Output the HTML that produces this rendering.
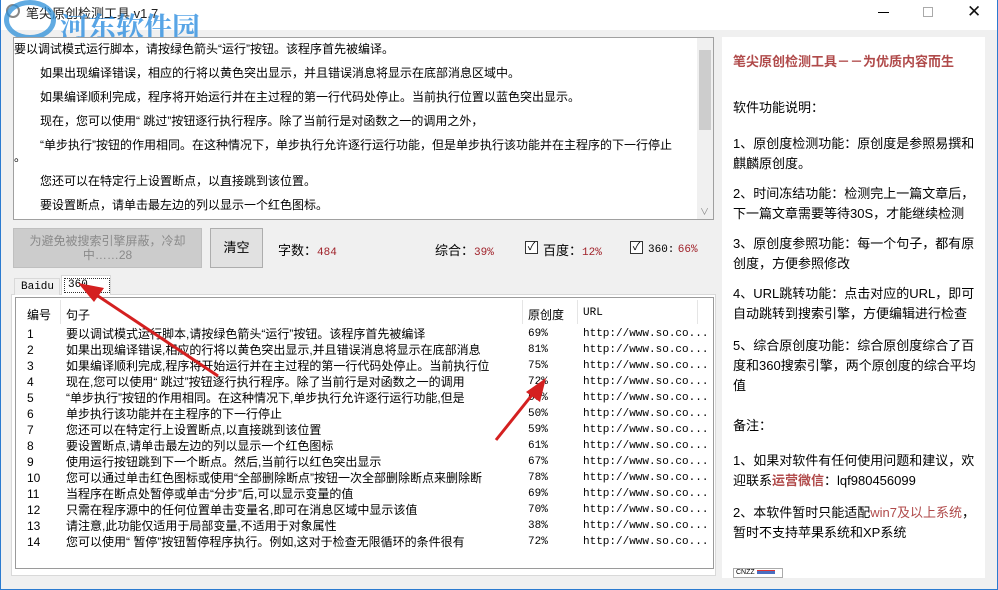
<!DOCTYPE html>
<html><head><meta charset="utf-8"><style>
*{margin:0;padding:0;box-sizing:border-box}
body{width:998px;height:590px;position:relative;background:#f0f0f0;font-family:"Liberation Sans","Noto Sans CJK SC",sans-serif;font-size:12px;color:#000;overflow:hidden}
.a{position:absolute;white-space:nowrap}
.mono{font-family:"Liberation Mono","Noto Sans CJK SC",monospace;font-size:11px}
.red{color:#a0222a}
.rp div{position:absolute;left:0;width:245px;white-space:normal;line-height:20px;font-size:13px}
</style></head><body>
<div class="a" style="left:0;top:0;width:998px;height:30px;background:#fff"></div>
<div class="a" style="left:0;top:0;width:1px;height:590px;background:#2b7bd0"></div>
<div class="a" style="left:997px;top:0;width:1px;height:590px;background:#2b7bd0"></div>
<div class="a" style="left:0;top:589px;width:998px;height:1px;background:#2b7bd0"></div>
<div class="a" style="left:6px;top:4px;width:14px;height:14px;border-radius:50%;border:2px solid #888"></div>
<div class="a" style="left:26px;top:3px;font-size:13px;color:#222">笔尖原创检测工具 v1.7</div>
<div class="a" style="left:878px;top:12px;width:11px;height:1px;background:#000"></div>
<div class="a" style="left:923px;top:7px;width:10px;height:10px;border:1px solid #aaa"></div>
<div class="a" style="left:967px;top:2px;font-size:17px;color:#111">✕</div>
<div class="a" style="left:4px;top:0;width:52px;height:40px;border-radius:50%;border:5px solid #2c8fd8;opacity:.75"></div>
<div class="a" style="left:60px;top:6px;font-size:28px;font-weight:bold;color:#2f8fe0;opacity:.8;font-family:'Noto Serif CJK SC',serif">河东软件园</div>

<div class="a" style="left:13px;top:37px;width:701px;height:183px;background:#fff;border:1px solid #a0a0a0"></div>
<div class="a" style="left:697px;top:38px;width:16px;height:181px;background:#f0f0f0"></div>
<div class="a" style="left:699px;top:50px;width:12px;height:80px;background:#cdcdcd"></div>
<div class="a" style="left:700px;top:205px;font-size:9px;color:#888">∨</div>
<div class="a" style="left:14px;top:40px;font-size:12px">要以调试模式运行脚本，请按绿色箭头“运行”按钮。该程序首先被编译。</div>
<div class="a" style="left:40px;top:64px">如果出现编译错误，相应的行将以黄色突出显示，并且错误消息将显示在底部消息区域中。</div>
<div class="a" style="left:40px;top:88px">如果编译顺利完成，程序将开始运行并在主过程的第一行代码处停止。当前执行位置以蓝色突出显示。</div>
<div class="a" style="left:40px;top:112px">现在，您可以使用“ 跳过”按钮逐行执行程序。除了当前行是对函数之一的调用之外，</div>
<div class="a" style="left:40px;top:136px">“单步执行”按钮的作用相同。在这种情况下，单步执行允许逐行运行功能，但是单步执行该功能并在主程序的下一行停止</div>
<div class="a" style="left:14px;top:148px">。</div>
<div class="a" style="left:40px;top:172px">您还可以在特定行上设置断点，以直接跳到该位置。</div>
<div class="a" style="left:40px;top:196px">要设置断点，请单击最左边的列以显示一个红色图标。</div>

<div class="a" style="left:13px;top:228px;width:189px;height:40px;background:#cccccc;border:1px solid #bfbfbf;color:#8a8a8a;text-align:center;font-size:12px;line-height:14px;padding-top:5px;white-space:normal">为避免被搜索引擎屏蔽，冷却中……28</div>
<div class="a" style="left:210px;top:228px;width:53px;height:40px;background:#e1e1e1;border:1px solid #adadad;text-align:center;line-height:38px;font-size:13px">清空</div>
<div class="a" style="left:278px;top:240px;font-size:13px">字数：<span class="mono red">484</span></div>
<div class="a" style="left:435px;top:240px;font-size:13px">综合：<span class="mono red">39%</span></div>
<div class="a" style="left:525px;top:241px;width:13px;height:13px;border:1px solid #333;font-size:11px;line-height:11px;text-align:center;background:#fff">✓</div>
<div class="a" style="left:543px;top:240px;font-size:13px">百度：<span class="mono red">12%</span></div>
<div class="a" style="left:630px;top:241px;width:13px;height:13px;border:1px solid #333;font-size:11px;line-height:11px;text-align:center;background:#fff">✓</div>
<div class="a" style="left:648px;top:241px;font-size:12px"><span class="mono">360:</span> <span class="mono red">66%</span></div>

<div class="a" style="left:11px;top:294px;width:705px;height:282px;background:#fff;border:1px solid #d9d9d9"></div>
<div class="a mono" style="left:14px;top:278px;width:46px;height:17px;background:#f0f0f0;border:1px solid #d9d9d9;border-bottom:none;padding:2px 0 0 6px">Baidu</div>
<div class="a" style="left:61px;top:275px;width:50px;height:20px;background:#fff;border:1px solid #d9d9d9;border-bottom:none"></div>
<div class="a mono" style="left:64px;top:278px;width:46px;height:15px;border:1px dotted #333;padding:0 0 0 3px;line-height:13px">360</div>
<div class="a" style="left:15px;top:297px;width:699px;height:272px;background:#fff;border:1px solid #9a9a9a"></div>
<div class="a" style="left:60px;top:300px;width:1px;height:24px;background:#e5e5e5"></div>
<div class="a" style="left:522px;top:300px;width:1px;height:24px;background:#e5e5e5"></div>
<div class="a" style="left:577px;top:300px;width:1px;height:24px;background:#e5e5e5"></div>
<div class="a" style="left:697px;top:300px;width:1px;height:24px;background:#e5e5e5"></div>
<div class="a" style="left:27px;top:306px">编号</div>
<div class="a" style="left:66px;top:306px">句子</div>
<div class="a" style="left:528px;top:306px">原创度</div>
<div class="a mono" style="left:583px;top:307px">URL</div>
<div class="a" style="left:27px;top:326px;line-height:16px">1<br>2<br>3<br>4<br>5<br>6<br>7<br>8<br>9<br>10<br>11<br>12<br>13<br>14</div>
<div class="a" style="left:66px;top:326px;line-height:16px;font-size:12px">要以调试模式运行脚本,请按绿色箭头“运行”按钮。该程序首先被编译<br>如果出现编译错误,相应的行将以黄色突出显示,并且错误消息将显示在底部消息<br>如果编译顺利完成,程序将开始运行并在主过程的第一行代码处停止。当前执行位<br>现在,您可以使用“ 跳过”按钮逐行执行程序。除了当前行是对函数之一的调用<br>“单步执行”按钮的作用相同。在这种情况下,单步执行允许逐行运行功能,但是<br>单步执行该功能并在主程序的下一行停止<br>您还可以在特定行上设置断点,以直接跳到该位置<br>要设置断点,请单击最左边的列以显示一个红色图标<br>使用运行按钮跳到下一个断点。然后,当前行以红色突出显示<br>您可以通过单击红色图标或使用“全部删除断点”按钮一次全部删除断点来删除断<br>当程序在断点处暂停或单击“分步”后,可以显示变量的值<br>只需在程序源中的任何位置单击变量名,即可在消息区域中显示该值<br>请注意,此功能仅适用于局部变量,不适用于对象属性<br>您可以使用“ 暂停”按钮暂停程序执行。例如,这对于检查无限循环的条件很有</div>
<div class="a mono" style="left:528px;top:326px;line-height:16px">69%<br>81%<br>75%<br>72%<br>69%<br>50%<br>59%<br>61%<br>67%<br>78%<br>69%<br>70%<br>38%<br>72%</div>
<div class="a mono" style="left:583px;top:326px;line-height:16px">http://www.so.co...<br>http://www.so.co...<br>http://www.so.co...<br>http://www.so.co...<br>http://www.so.co...<br>http://www.so.co...<br>http://www.so.co...<br>http://www.so.co...<br>http://www.so.co...<br>http://www.so.co...<br>http://www.so.co...<br>http://www.so.co...<br>http://www.so.co...<br>http://www.so.co...</div>

<svg class="a" style="left:0;top:0" width="998" height="590">
<line x1="218" y1="376" x2="92" y2="292" stroke="#d42020" stroke-width="3"/>
<polygon points="78,283 104,288 94,302" fill="#d42020"/>
<line x1="496" y1="440" x2="536" y2="390" stroke="#d42020" stroke-width="3"/>
<polygon points="546,378 540,402 526,392" fill="#d42020"/>
</svg>

<div class="a" style="left:722px;top:37px;width:263px;height:541px;background:#fff"></div>
<div class="a" style="left:733px;top:51px;font-size:13px;font-weight:bold;color:#b04a4a">笔尖原创检测工具－－为优质内容而生</div>
<div class="a rp" style="left:733px;top:0">
<div style="top:98px">软件功能说明：</div>
<div style="top:134px">1、原创度检测功能：原创度是参照易撰和麒麟原创度。</div>
<div style="top:184px">2、时间冻结功能：检测完上一篇文章后，下一篇文章需要等待30S，才能继续检测</div>
<div style="top:234px">3、原创度参照功能：每一个句子，都有原创度，方便参照修改</div>
<div style="top:284px">4、URL跳转功能：点击对应的URL，即可自动跳转到搜索引擎，方便编辑进行检查</div>
<div style="top:336px">5、综合原创度功能：综合原创度综合了百度和360搜索引擎，两个原创度的综合平均值</div>
<div style="top:416px">备注：</div>
<div style="top:451px">1、如果对软件有任何使用问题和建议，欢迎联系<b style="color:#b04a4a">运营微信</b>：lqf980456099</div>
<div style="top:503px">2、本软件暂时只能适配<span style="color:#b04a4a">win7及以上系统</span>，暂时不支持苹果系统和XP系统</div>
</div>
<div class="a" style="left:733px;top:568px;width:50px;height:10px;border:1px solid #aaa;font-size:7px;line-height:8px;padding-left:2px">CNZZ <span style="display:inline-block;width:18px;height:4px;background:#4a6fc0;border-top:1px solid #d33"></span></div>
</body></html>
